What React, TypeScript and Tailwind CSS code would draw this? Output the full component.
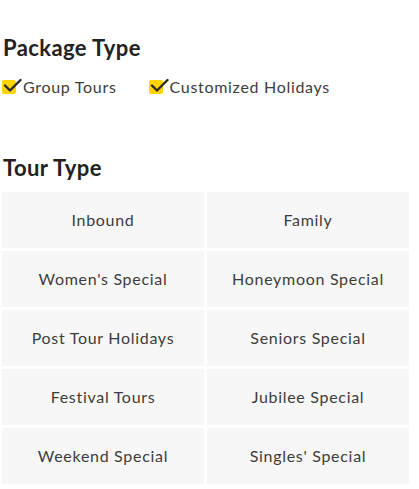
const packages = ['Group Tours', 'Customized Holidays'];

const tourTypes = [
  'Inbound',
  'Family',
  "Women's Special",
  'Honeymoon Special',
  'Post Tour Holidays',
  'Seniors Special',
  'Festival Tours',
  'Jubilee Special',
  'Weekend Special',
  "Singles' Special",
];

const CheckBox = () => (
  <span className="relative inline-block w-[14px] h-[14px] bg-[#ffd400] rounded-[2px] shrink-0">
    <svg
      className="absolute left-[1px] top-[-2px]"
      width="19"
      height="15"
      viewBox="0 0 19 15"
      fill="none"
    >
      <path d="M2 7.5 L7 12.5 L17.5 2" stroke="#2b2b2b" strokeWidth="2.4" strokeLinecap="round" strokeLinejoin="round" />
    </svg>
  </span>
);

export default function App() {
  return (
    <div className="w-[419px] h-[489px] bg-white font-['Lato',sans-serif] text-[#333] pt-[34px] pl-[2px] overflow-hidden">
      {/* Package Type */}
      <h2 className="pl-[1px] text-[22px] font-bold leading-[28px] tracking-[0.4px] text-[#222]">Package Type</h2>
      <div className="flex items-center gap-[32px] mt-[13px]">
        {packages.map((p) => (
          <label key={p} className="flex items-center gap-[7px] text-[16px] text-[#3d3d3d] tracking-[0.7px]">
            <CheckBox />
            {p}
          </label>
        ))}
      </div>

      {/* Tour Type */}
      <h2 className="mt-[55px] pl-[1px] text-[22px] font-bold leading-[28px] tracking-[0.4px] text-[#222]">Tour Type</h2>
      <div className="grid grid-cols-2 gap-[3px] w-[407px] mt-[10px]">
        {tourTypes.map((t) => (
          <div
            key={t}
            className="h-[56px] bg-[#f7f7f7] flex items-center justify-center text-[16px] text-[#3d3d3d] tracking-[0.7px]"
          >
            {t}
          </div>
        ))}
      </div>
    </div>
  );
}
